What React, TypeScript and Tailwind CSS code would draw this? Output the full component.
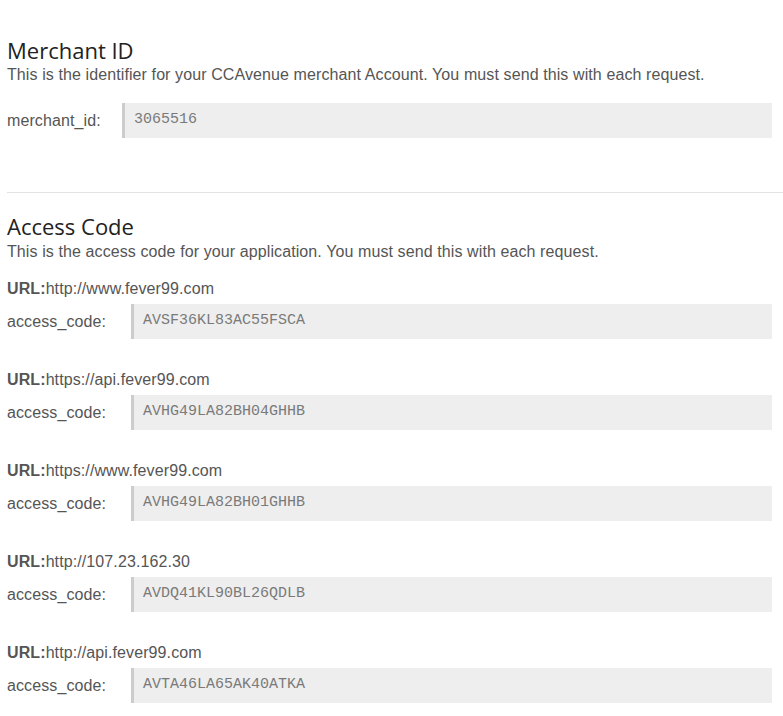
import React from "react";

const sans = { fontFamily: '"Liberation Sans", Arial, sans-serif' };

function CodeRow({ label, value, labelWidth }: { label: string; value: string; labelWidth: string }) {
  return (
    <div className="flex items-center mr-[11px]">
      <div className={`${labelWidth} shrink-0 text-[16px] text-[#555] tracking-[0.1px]`} style={sans}>
        {label}
      </div>
      <div className="flex-1 h-[35px] flex items-center bg-[#eeeeee] border-l-[3px] border-[#cccccc] pl-[9px]">
        <span className="font-['Liberation_Mono',monospace] text-[15px] text-[#7a7a7a]">{value}</span>
      </div>
    </div>
  );
}

const entries = [
  { url: "http://www.fever99.com", code: "AVSF36KL83AC55FSCA" },
  { url: "https://api.fever99.com", code: "AVHG49LA82BH04GHHB" },
  { url: "https://www.fever99.com", code: "AVHG49LA82BH01GHHB" },
  { url: "http://107.23.162.30", code: "AVDQ41KL90BL26QDLB" },
  { url: "http://api.fever99.com", code: "AVTA46LA65AK40ATKA" },
];

export default function App() {
  return (
    <div className="w-[783px] h-[716px] bg-white overflow-hidden pl-[7px]" style={sans}>
      <div className="pt-[37px]">
        <h2 className="font-['Open_Sans',sans-serif] text-[22px] leading-[26px] text-[#222]">Merchant ID</h2>
        <p className="mt-[3px] text-[16px] leading-[18px] text-[#555] tracking-[0.1px]">
          This is the identifier for your CCAvenue merchant Account. You must send this with each request.
        </p>
        <div className="mt-[19px]">
          <CodeRow label="merchant_id:" value="3065516" labelWidth="w-[115px]" />
        </div>
      </div>

      <div className="mt-[54px] h-px bg-[#e3e3e3]" />

      <div className="pt-[20px]">
        <h2 className="font-['Open_Sans',sans-serif] text-[22px] leading-[26px] text-[#222]">Access Code</h2>
        <p className="mt-[4px] text-[16px] leading-[18px] text-[#555] tracking-[0.1px]">
          This is the access code for your application. You must send this with each request.
        </p>
        <div className="mt-[19px] flex flex-col gap-[32px]">
          {entries.map((e) => (
            <div key={e.url} className="flex flex-col gap-[6px]">
              <div className="text-[16px] leading-[18px] text-[#555] tracking-[0.1px]">
                <span className="font-bold">URL:</span>
                {e.url}
              </div>
              <CodeRow label="access_code:" value={e.code} labelWidth="w-[124px]" />
            </div>
          ))}
        </div>
      </div>
    </div>
  );
}
